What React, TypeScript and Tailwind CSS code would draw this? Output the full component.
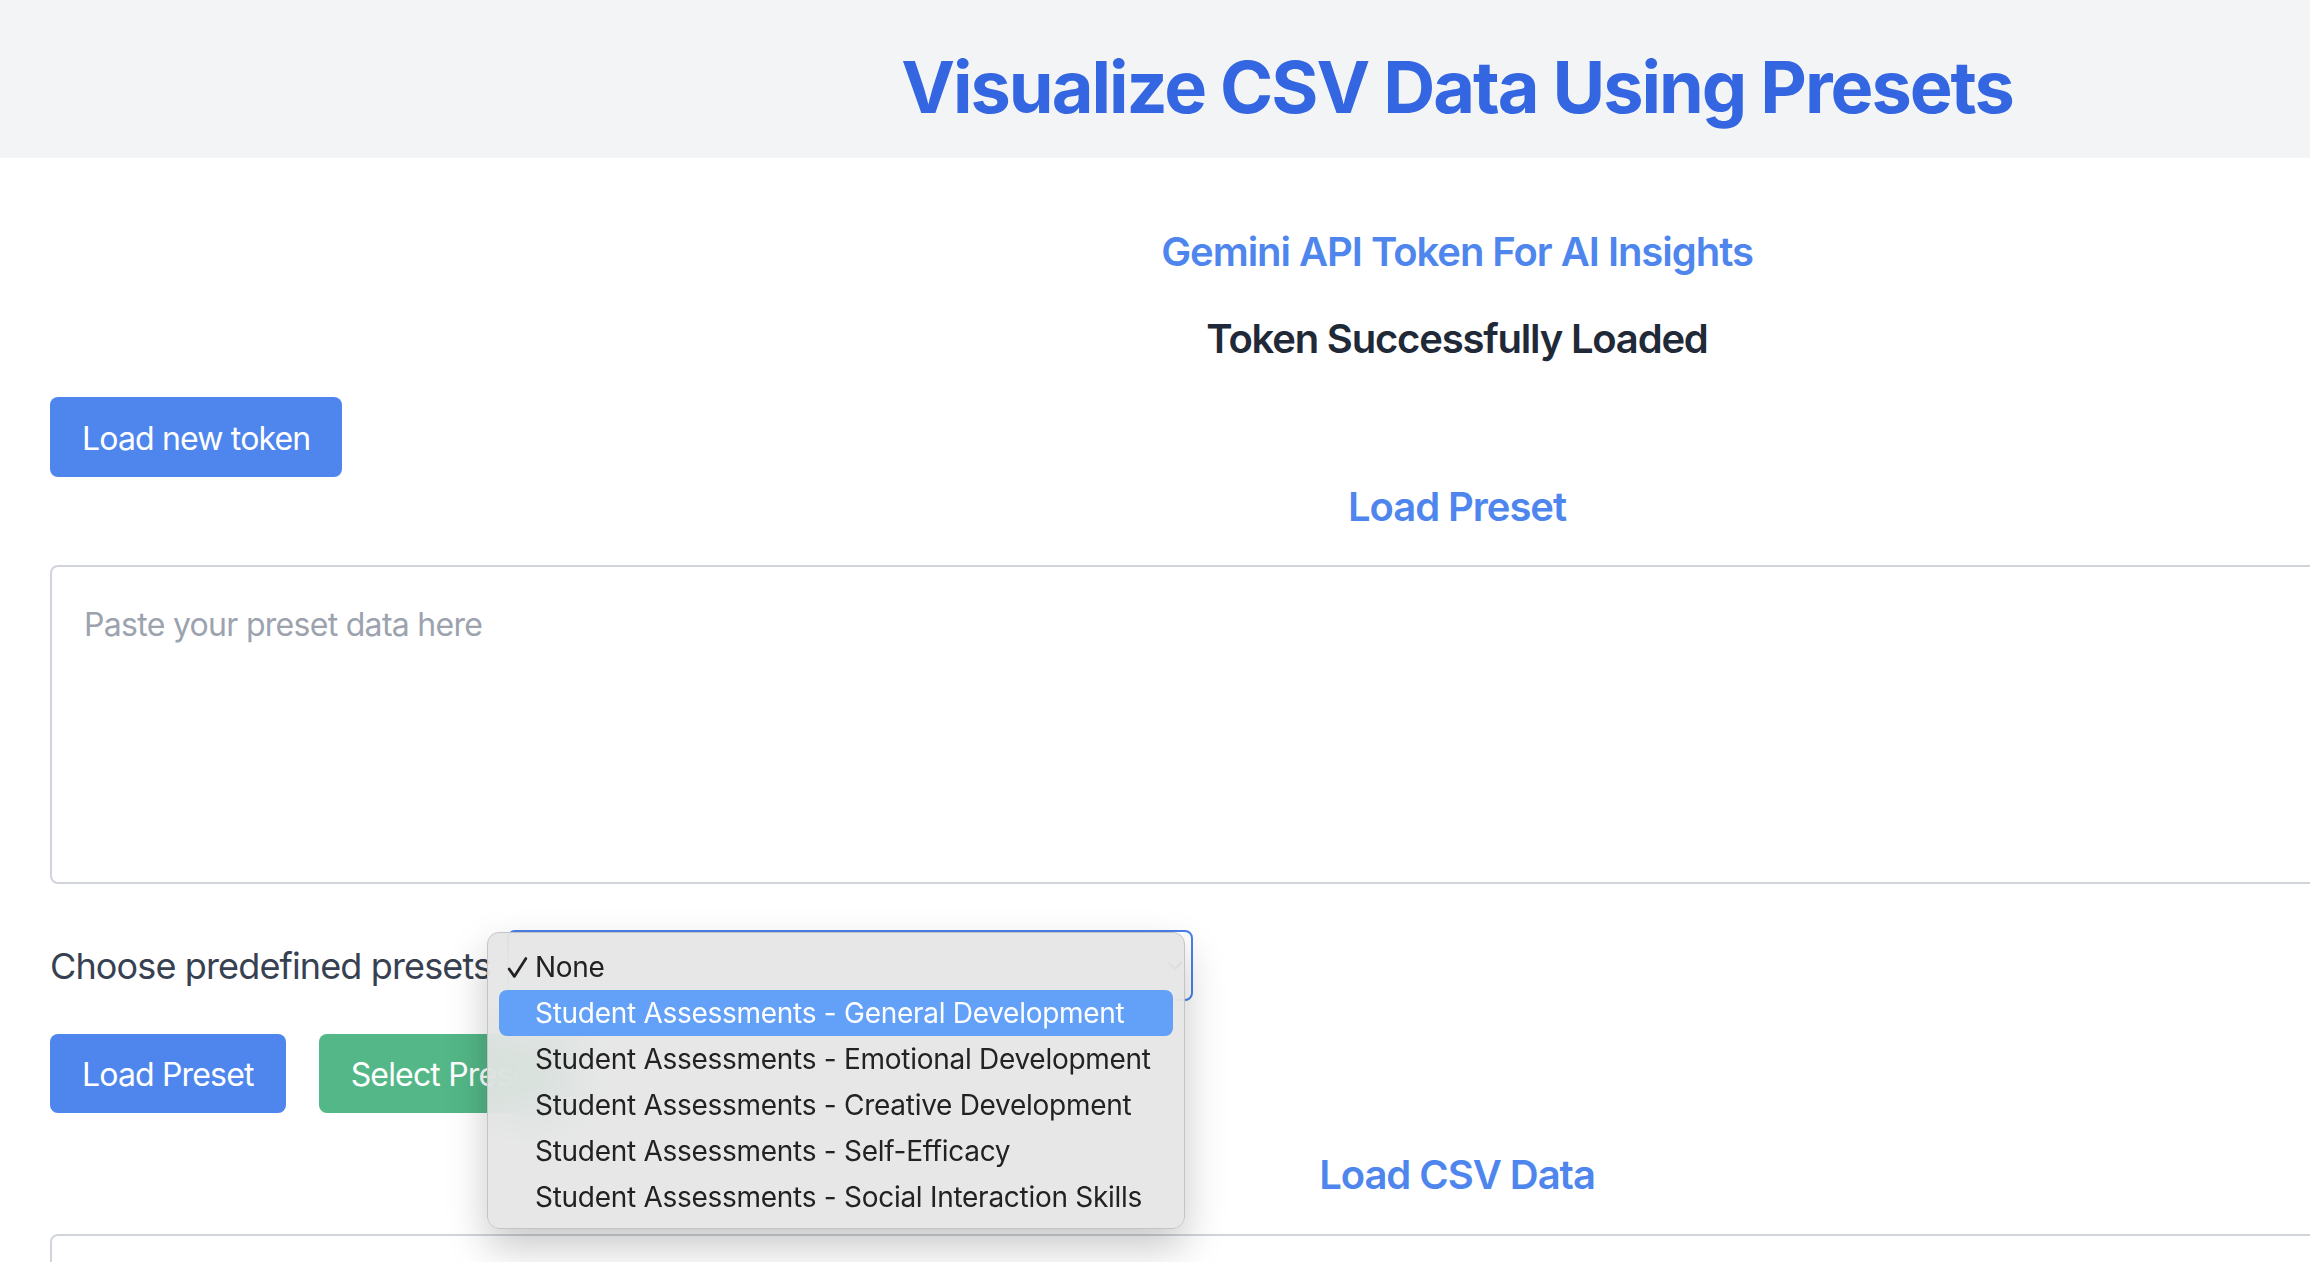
import React from 'react';

const presets = [
  'Student Assessments - General Development',
  'Student Assessments - Emotional Development',
  'Student Assessments - Creative Development',
  'Student Assessments - Self-Efficacy',
  'Student Assessments - Social Interaction Skills',
];

const SectionTitle: React.FC<{ children: React.ReactNode; className?: string }> = ({ children, className = '' }) => (
  <h2 className={`text-center text-[40px] leading-[56px] font-semibold tracking-[-0.026em] text-[#4e86ee] ${className}`}>
    {children}
  </h2>
);

const App: React.FC = () => {
  return (
    <div className="h-screen w-screen overflow-hidden bg-white font-['Inter','Noto_Sans',sans-serif]">
      <div className="w-[2914px]">
        {/* Header */}
        <header className="h-[158px] bg-[#f3f4f6] pt-[47px]">
          <h1 className="text-center text-[72px] leading-[80px] font-bold tracking-[-0.028em] text-[#3366e0]">
            Visualize CSV Data Using Presets
          </h1>
        </header>

        <main className="px-[50px]">
          {/* Token */}
          <SectionTitle className="mt-[66px]">Gemini API Token For AI Insights</SectionTitle>
          <p className="mt-[31px] text-center text-[40px] leading-[56px] font-semibold tracking-[-0.03em] text-[#1f2937]">
            Token Successfully Loaded
          </p>
          <div className="mt-[30px]">
            <button className="h-[80px] rounded-lg bg-[#4e86ee] px-8 pt-[3px] text-[32px] leading-[48px] tracking-[-0.026em] text-white">
              Load new token
            </button>
          </div>

          {/* Preset */}
          <SectionTitle className="mt-[2px]">Load Preset</SectionTitle>
          <textarea
            className="mt-[30px] block h-[319px] w-full resize-none rounded-lg border-2 border-[#d1d5db] px-8 pt-[34px] pb-8 text-[32px] leading-[48px] tracking-[-0.022em] text-[#1f2937] placeholder:text-[#9ca3af] outline-none"
            placeholder="Paste your preset data here"
          />

          <div className="mt-[46px] flex items-center">
            <label className="w-[457px] shrink-0 text-[36px] leading-[56px] tracking-[-0.024em] text-[#374151]">
              Choose predefined presets
            </label>
            <div className="relative h-[71px] w-[686px] rounded-lg border-2 border-[#4a80e8] bg-white">
              <svg className="absolute right-[6px] top-[24px] h-[20px] w-[20px]" viewBox="0 0 20 20" fill="none">
                <path d="M4 7l6 6 6-6" stroke="#333" strokeWidth="2.5" strokeLinecap="round" strokeLinejoin="round" />
              </svg>

              {/* Open native-style dropdown */}
              <div className="absolute left-[-22px] top-[0px] z-10 h-[297px] w-[698px] rounded-[12px] border border-[#c4c4c4] bg-[#e4e4e4]/90 px-[11px] pt-[11px] shadow-[0_18px_40px_rgba(0,0,0,0.22)] backdrop-blur-xl">
                <div className="relative h-[46px] pl-[36px] text-[28px] leading-[46px] tracking-[-0.01em] text-[#222]">
                  <svg className="absolute left-[8px] top-[12px] h-[24px] w-[21px]" viewBox="0 0 20 22" fill="none">
                    <path d="M2 12l5 7L18 2" stroke="#222" strokeWidth="2.6" strokeLinecap="round" strokeLinejoin="round" />
                  </svg>
                  None
                </div>
                {presets.map((p, i) => (
                  <div
                    key={p}
                    className={`h-[46px] rounded-[8px] pl-[36px] text-[28px] leading-[46px] tracking-[-0.01em] ${
                      i === 0 ? 'bg-[#63a0f8] text-white' : 'text-[#222]'
                    }`}
                  >
                    {p}
                  </div>
                ))}
              </div>
            </div>
          </div>

          <div className="mt-[33px] flex gap-[33px]">
            <button className="h-[79px] rounded-lg bg-[#4e86ee] px-8 pt-[3px] text-[32px] leading-[48px] tracking-[-0.026em] text-white">
              Load Preset
            </button>
            <button className="h-[79px] rounded-lg bg-[#53b787] px-8 pt-[3px] text-[32px] leading-[48px] tracking-[-0.026em] text-white">
              Select Preset
            </button>
          </div>

          {/* CSV */}
          <SectionTitle className="mt-[34px]">Load CSV Data</SectionTitle>
          <textarea
            className="mt-[31px] block h-[319px] w-full resize-none rounded-lg border-2 border-[#d1d5db] px-8 pt-[34px] pb-8 text-[32px] leading-[48px] tracking-[-0.022em] placeholder:text-[#9ca3af] outline-none"
            placeholder="Paste your CSV data here"
          />
        </main>
      </div>
    </div>
  );
};

export default App;
